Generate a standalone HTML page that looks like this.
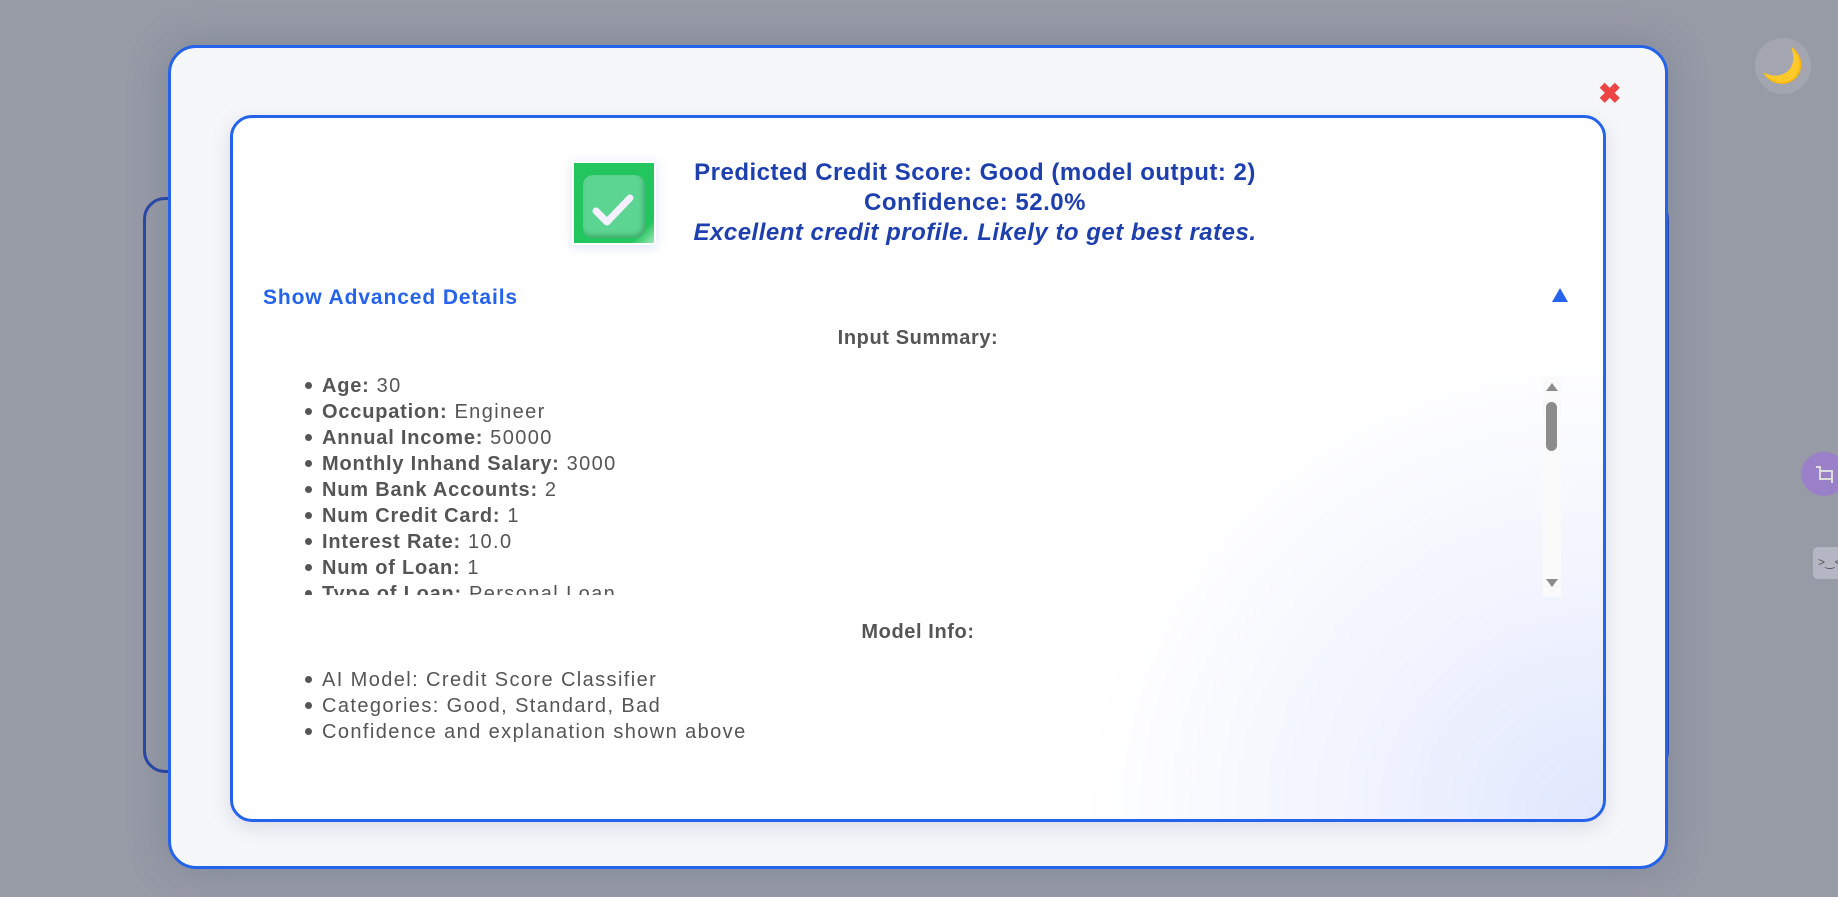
<!DOCTYPE html>
<html><head><style>
html,body{margin:0;padding:0;width:1838px;height:897px;overflow:hidden;background:#979ba6;font-family:"Liberation Sans",sans-serif;}
.bgcard{position:absolute;left:143px;top:197px;width:1526px;height:576px;border:3px solid #2a47a8;border-radius:22px;box-sizing:border-box;background:#979ba6;}
.outer{position:absolute;left:168px;top:45px;width:1500px;height:824px;box-sizing:border-box;border:3px solid #2563eb;border-radius:28px;background:#f6f7f9;box-shadow:0 0 40px rgba(60,70,110,.25);}
.inner{position:absolute;left:230px;top:115px;width:1376px;height:707px;box-sizing:border-box;border:3px solid #2563eb;border-radius:22px;background:radial-gradient(ellipse 520px 480px at 100% 100%,#e0e7fd 0%,#f0f3fe 45%,rgba(255,255,255,0) 100%),#fff;box-shadow:0 6px 20px rgba(60,70,140,.15);}
.close{position:absolute;left:1598px;top:80px;color:#ef4444;font-size:28px;font-weight:bold;line-height:28px;}
.moon{position:absolute;left:1755px;top:38px;width:56px;height:56px;border-radius:50%;background:#a3a6b0;font-size:34px;text-align:center;line-height:56px;}
.crop{position:absolute;left:1801px;top:452px;width:46px;height:44px;border-radius:50%;background:#9a80c8;}
.face{position:absolute;left:1813px;top:547px;width:40px;height:32px;border-radius:5px;background:#b4b6c4;color:#555;font-size:12px;line-height:30px;padding-left:5px;}
.icon{position:absolute;left:572px;top:161px;width:84px;height:84px;background:#fff;box-shadow:0 2px 10px rgba(120,140,220,.25);}
.icon .g{position:absolute;left:2px;top:2px;width:80px;height:80px;background:linear-gradient(135deg,#22c55e 85%,#9ee8b8 100%);}
.icon .b{position:absolute;left:11px;top:14px;width:62px;height:63px;border-radius:10px;background:#5dd592;box-shadow:inset -2px -3px 5px rgba(0,80,30,.3);}
.head{position:absolute;left:600px;top:158px;width:750px;text-align:center;color:#1e3fae;font-size:24px;line-height:30px;font-weight:bold;letter-spacing:0.5px;}
.head .n{font-weight:bold;}
.adv{position:absolute;left:263px;top:286px;color:#2563eb;font-size:21px;font-weight:bold;letter-spacing:0.9px;}
.tri{position:absolute;left:1552px;top:288px;width:0;height:0;border-left:8px solid transparent;border-right:8px solid transparent;border-bottom:14px solid #2563eb;}
.h{position:absolute;width:1376px;left:230px;text-align:center;color:#555;font-size:20px;font-weight:bold;letter-spacing:0.6px;}
ul{position:absolute;margin:0;padding:0 0 0 322px;left:0;list-style:none;color:#555;font-size:20px;line-height:26px;letter-spacing:1.4px;}
ul b{letter-spacing:0.8px;}
li{position:relative;}
li:before{content:"";position:absolute;left:-17px;top:9px;width:7px;height:7px;border-radius:50%;background:#555;}
.scrollwrap{position:absolute;left:0;top:372px;width:1838px;height:223px;overflow:hidden;}
.sb{position:absolute;left:1543px;top:377px;width:18px;height:220px;background:#fafafa;}
.thumb{position:absolute;left:1546px;top:402px;width:11px;height:49px;border-radius:6px;background:#8c8c8c;}
.up{position:absolute;left:1546px;top:383px;border-left:6px solid transparent;border-right:6px solid transparent;border-bottom:8px solid #8c8c8c;}
.dn{position:absolute;left:1546px;top:579px;border-left:6px solid transparent;border-right:6px solid transparent;border-top:8px solid #8c8c8c;}
</style></head><body>
<div class="bgcard"></div>
<div class="moon">🌙</div>
<div class="crop"><svg width="46" height="44" viewBox="0 0 46 44"><path d="M15 15h4v12h12M19 19h12v12" stroke="#ddd" stroke-width="2" fill="none"/></svg></div>
<div class="face">&gt;‿&lt;</div>
<div class="outer"></div>
<div class="close">✖</div>
<div class="inner"></div>
<div class="icon"><div class="g"></div><div class="b"><svg width="62" height="63" viewBox="0 0 62 63"><path d="M13 36l11 11 23-24" stroke="#f5f0ff" stroke-width="7" stroke-linecap="round" stroke-linejoin="round" fill="none"/></svg></div></div>
<div class="head">Predicted Credit Score: Good (model output: 2)<br>Confidence: 52.0%<br><i>Excellent credit profile. Likely to get best rates.</i></div>
<div class="adv">Show Advanced Details</div>
<div class="tri"></div>
<div class="h" style="top:327px">Input Summary:</div>
<div class="scrollwrap"><ul style="top:1px">
<li><b>Age:</b> 30</li>
<li><b>Occupation:</b> Engineer</li>
<li><b>Annual Income:</b> 50000</li>
<li><b>Monthly Inhand Salary:</b> 3000</li>
<li><b>Num Bank Accounts:</b> 2</li>
<li><b>Num Credit Card:</b> 1</li>
<li><b>Interest Rate:</b> 10.0</li>
<li><b>Num of Loan:</b> 1</li>
<li><b>Type of Loan:</b> Personal Loan</li>
</ul></div>
<div class="sb"></div><div class="up"></div><div class="thumb"></div><div class="dn"></div>
<div class="h" style="top:621px">Model Info:</div>
<ul style="top:667px">
<li>AI Model: Credit Score Classifier</li>
<li>Categories: Good, Standard, Bad</li>
<li>Confidence and explanation shown above</li>
</ul>
</body></html>
